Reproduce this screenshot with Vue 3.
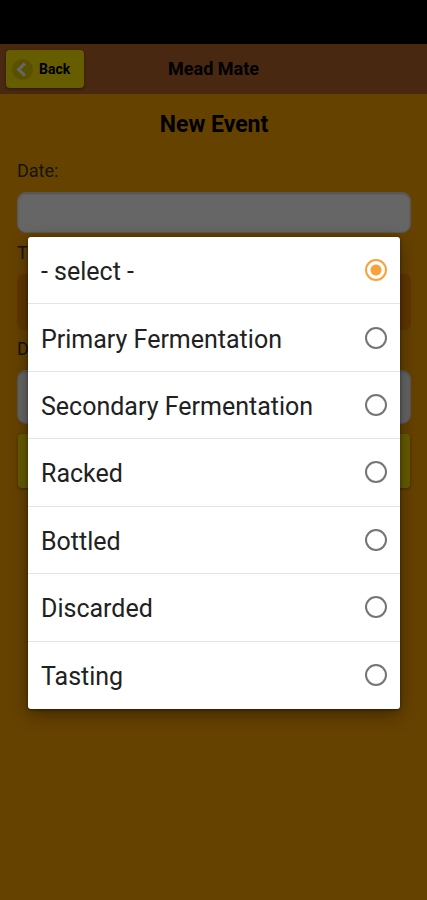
<script setup>
import { ref } from 'vue'

const options = [
  '- select -',
  'Primary Fermentation',
  'Secondary Fermentation',
  'Racked',
  'Bottled',
  'Discarded',
  'Tasting',
]
const selected = ref(options[0])
const date = ref('')
const description = ref('')
</script>

<template>
  <div class="screen">
    <div class="status-bar"></div>
    <div class="app">
      <header class="header">
        <button class="back" type="button">
          <svg class="back-icon" viewBox="0 0 22 22" aria-hidden="true">
            <circle cx="11" cy="11" r="11" fill="#000" fill-opacity="0.12" />
            <path d="M13.5 4.500 7 11l6.500 6.500" fill="none" stroke="#fff" stroke-width="3.200" />
          </svg>
          <span>Back</span>
        </button>
        <h1 class="title">Mead Mate</h1>
      </header>
      <main class="content">
        <h2 class="heading">New Event</h2>
        <form class="form" @submit.prevent>
          <label class="label" for="date">Date:</label>
          <input id="date" v-model="date" class="field date" type="text" />
          <label class="label" for="type">Type:</label>
          <select id="type" v-model="selected" class="type">
            <option v-for="option in options" :key="option">{{ option }}</option>
          </select>
          <label class="label" for="description">Description:</label>
          <textarea id="description" v-model="description" class="field description"></textarea>
          <button class="save" type="submit" aria-label="Save"></button>
        </form>
      </main>
    </div>
    <div class="scrim">
      <div class="dialog" role="dialog" aria-label="Type">
        <label v-for="option in options" :key="option" class="option">
          <span class="option-text">{{ option }}</span>
          <input v-model="selected" class="radio" type="radio" name="event-type" :value="option" />
        </label>
      </div>
    </div>
  </div>
</template>

<style>
body {
  background: #ffa500;
}
</style>

<style scoped>
.screen {
  position: relative;
  display: flex;
  flex-direction: column;
  min-height: 100vh;
  font-family: Roboto, "Liberation Sans", sans-serif;
  color: #000;
}

.screen * {
  box-sizing: border-box;
}

.status-bar {
  height: 44px;
  background: #000;
}

.app {
  flex: 1;
  background: #ffa500;
}

.header {
  display: grid;
  grid-template-columns: 1fr auto 1fr;
  align-items: center;
  height: 50px;
  padding: 0 6px;
  background: #b46428;
}

.back {
  display: flex;
  align-items: center;
  justify-self: start;
  gap: 6px;
  height: 38px;
  padding: 0 14px 0 6px;
  border: 0;
  border-radius: 4px;
  background: #ffe600;
  box-shadow: 0 1px 3px rgba(0, 0, 0, 0.4);
  font: 700 14px/20px Roboto, "Liberation Sans", sans-serif;
  color: #000;
}

.back-icon {
  width: 21px;
  height: 21px;
}

.title {
  margin: 0;
  font-size: 18px;
  line-height: 24px;
  font-weight: 700;
}

.content {
  padding: 17px 16px 0 17px;
}

.heading {
  margin: 0 0 17px;
  font-size: 23px;
  line-height: 28px;
  font-weight: 700;
  text-align: center;
}

.form {
  display: flex;
  flex-direction: column;
}

.label {
  height: 36px;
  font-size: 18px;
  line-height: 30px;
  color: #333;
}

.field {
  width: 100%;
  border: 1px solid #ddd;
  border-radius: 9px;
  background: #fff;
  box-shadow: inset 0 1px 2px rgba(0, 0, 0, 0.2);
  resize: none;
}

.date {
  height: 41px;
  margin-bottom: 5px;
}

.type {
  width: 100%;
  height: 56px;
  margin-bottom: 4px;
  border: 0;
  border-radius: 6px;
  background: #f08800;
  appearance: none;
  color: transparent;
}

.description {
  height: 54px;
  margin-bottom: 10px;
}

.save {
  height: 54px;
  margin: 0 1px;
  border: 0;
  border-radius: 4px;
  background: #ffe600;
  box-shadow: 0 1px 3px rgba(0, 0, 0, 0.4);
}

.scrim {
  position: absolute;
  inset: 0;
  display: flex;
  align-items: center;
  padding: 46px 27px 0 28px;
  background: rgba(0, 0, 0, 0.6);
}

.dialog {
  display: grid;
  grid-auto-rows: 1fr;
  width: 100%;
  min-height: 472px;
  border-radius: 3px;
  background: #fff;
  box-shadow: 0 5px 18px rgba(0, 0, 0, 0.4), 0 1px 3px rgba(0, 0, 0, 0.4);
}

.option {
  display: flex;
  align-items: center;
  justify-content: space-between;
  padding: 0 13px;
  border-bottom: 1px solid #e4e4e4;
  font-size: 25px;
  line-height: 32px;
  color: #212121;
}

.option:last-child {
  border-bottom: 0;
}

.option-text {
  padding-top: 4px;
}

.radio {
  width: 22px;
  height: 22px;
  margin: 0;
  border: 2px solid #757575;
  border-radius: 50%;
  background: #fff;
  appearance: none;
}

.radio:checked {
  border-color: #f9a13a;
  background: radial-gradient(circle, #f9a13a 5px, #fff 6px);
}
</style>
